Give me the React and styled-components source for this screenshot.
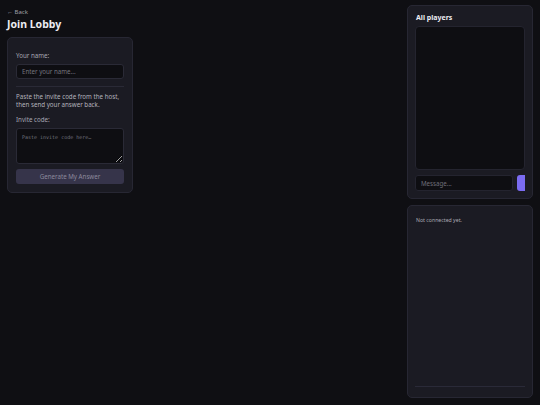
import React from "react";
import styled, { createGlobalStyle } from "styled-components";

const Global = createGlobalStyle`
  html, body { margin: 0; padding: 0; background: #0f0f13; }
  body { font-family: "Noto Sans", "Open Sans", sans-serif; color: #e6e6ee; }
  * { box-sizing: border-box; }
`;

const Page = styled.div`
  display: flex;
  width: 540px;
  height: 405px;
  overflow: hidden;
`;

const Main = styled.main`
  flex: 1;
  padding: 7px 7px;
  display: flex;
  flex-direction: column;
  align-items: flex-start;
`;

const BackLink = styled.a`
  font-size: 6px;
  color: #a0a0ac;
  line-height: 8px;
  margin-top: 1px;
  text-decoration: none;
`;

const Title = styled.h1`
  font-size: 10.5px;
  font-weight: 700;
  margin: 1px 0 6px;
  line-height: 14px;
  color: #ececf2;
`;

const Card = styled.section`
  width: 126px;
  background: #1b1b23;
  border: 1px solid #272733;
  border-radius: 5px;
  padding: 14px 8px 8px;
  display: flex;
  flex-direction: column;
`;

const Label = styled.label`
  font-size: 6.2px;
  color: #a6a6b2;
  line-height: 8px;
  margin-bottom: 4px;
`;

const TextInput = styled.input`
  width: 100%;
  height: 15px;
  background: #0e0e12;
  border: 1px solid #2a2a36;
  border-radius: 3px;
  color: #ddd;
  font-family: inherit;
  font-size: 6.2px;
  padding: 0 5px;
  outline: none;
  &::placeholder { color: #74747e; }
`;

const Divider = styled.hr`
  border: none;
  border-top: 1px solid #2a2a36;
  margin: 7px 0 6px;
  width: 100%;
`;

const Paragraph = styled.p`
  margin: 0 0 7px;
  font-size: 6.2px;
  line-height: 8px;
  color: #b2b2bb;
`;

const TextArea = styled.textarea`
  width: 100%;
  height: 36px;
  background: #0e0e12;
  border: 1px solid #2a2a36;
  border-radius: 3px;
  font-family: "DejaVu Sans Mono", "Liberation Mono", monospace;
  font-size: 5px;
  padding: 5px 5px;
  color: #ddd;
  resize: vertical;
  outline: none;
  &::placeholder { color: #74747e; }
`;

const PrimaryButton = styled.button`
  margin-top: 5px;
  width: 100%;
  height: 15px;
  border: none;
  border-radius: 3px;
  background: #36344a;
  color: #8c8a9c;
  font-family: inherit;
  font-size: 6.2px;
  padding: 0;
`;

const Aside = styled.aside`
  width: 133px;
  padding: 5px 7px 7px 0;
  display: flex;
  flex-direction: column;
  gap: 6px;
`;

const Panel = styled.section`
  flex: ${(p) => (p.$height ? `0 0 ${p.$height}px` : "1 1 0")};
  background: #1b1b23;
  border: 1px solid #272733;
  border-radius: 5px;
  padding: ${(p) => p.$pad || "8px"};
  display: flex;
  flex-direction: column;
  min-height: 0;
`;

const PanelTitle = styled.h2`
  margin: 0 0 3px 1px;
  font-size: 7px;
  line-height: 10px;
  font-weight: 700;
  color: #ececf2;
`;

const PlayerList = styled.div`
  flex: 1;
  background: #0e0e12;
  border: 1px solid #24242f;
  border-radius: 4px;
`;

const MessageRow = styled.div`
  margin-top: 5px;
  display: flex;
  gap: 4px;
  overflow: hidden;
  height: 16px;
  flex-shrink: 0;
`;

const MessageInput = styled.input`
  width: 98px;
  min-width: 98px;
  flex-shrink: 0;
  height: 16px;
  background: #0e0e12;
  border: 1px solid #24242f;
  border-radius: 3px;
  color: #ddd;
  font-family: inherit;
  font-size: 6.2px;
  padding: 0 5px;
  outline: none;
  &::placeholder { color: #6e6e78; }
`;

const SendButton = styled.button`
  width: 30px;
  min-width: 30px;
  flex-shrink: 0;
  height: 16px;
  border: none;
  border-radius: 3px;
  background: #7b6cf2;
  padding: 0;
`;

const Status = styled.div`
  font-size: 5.2px;
  line-height: 8px;
  color: #a8a8b2;
  margin-left: 1px;
`;

const Spacer = styled.div`
  flex: 1;
`;

const FooterRule = styled.div`
  border-top: 1px solid #2a2a38;
  margin-bottom: 2px;
`;

export default function App() {
  return (
    <>
      <Global />
      <Page>
        <Main>
          <BackLink href="#">← Back</BackLink>
          <Title>Join Lobby</Title>
          <Card>
            <Label>Your name:</Label>
            <TextInput placeholder="Enter your name..." />
            <Divider />
            <Paragraph>
              Paste the invite code from the host, then send your answer back.
            </Paragraph>
            <Label>Invite code:</Label>
            <TextArea placeholder="Paste invite code here…" />
            <PrimaryButton>Generate My Answer</PrimaryButton>
          </Card>
        </Main>
        <Aside>
          <Panel $height={194} $pad="7px 7px 7px">
            <PanelTitle>All players</PanelTitle>
            <PlayerList />
            <MessageRow>
              <MessageInput placeholder="Message..." />
              <SendButton aria-label="Send" title="Send" />
            </MessageRow>
          </Panel>
          <Panel $pad="10px 7px 8px">
            <Status>Not connected yet.</Status>
            <Spacer />
            <FooterRule />
          </Panel>
        </Aside>
      </Page>
    </>
  );
}
